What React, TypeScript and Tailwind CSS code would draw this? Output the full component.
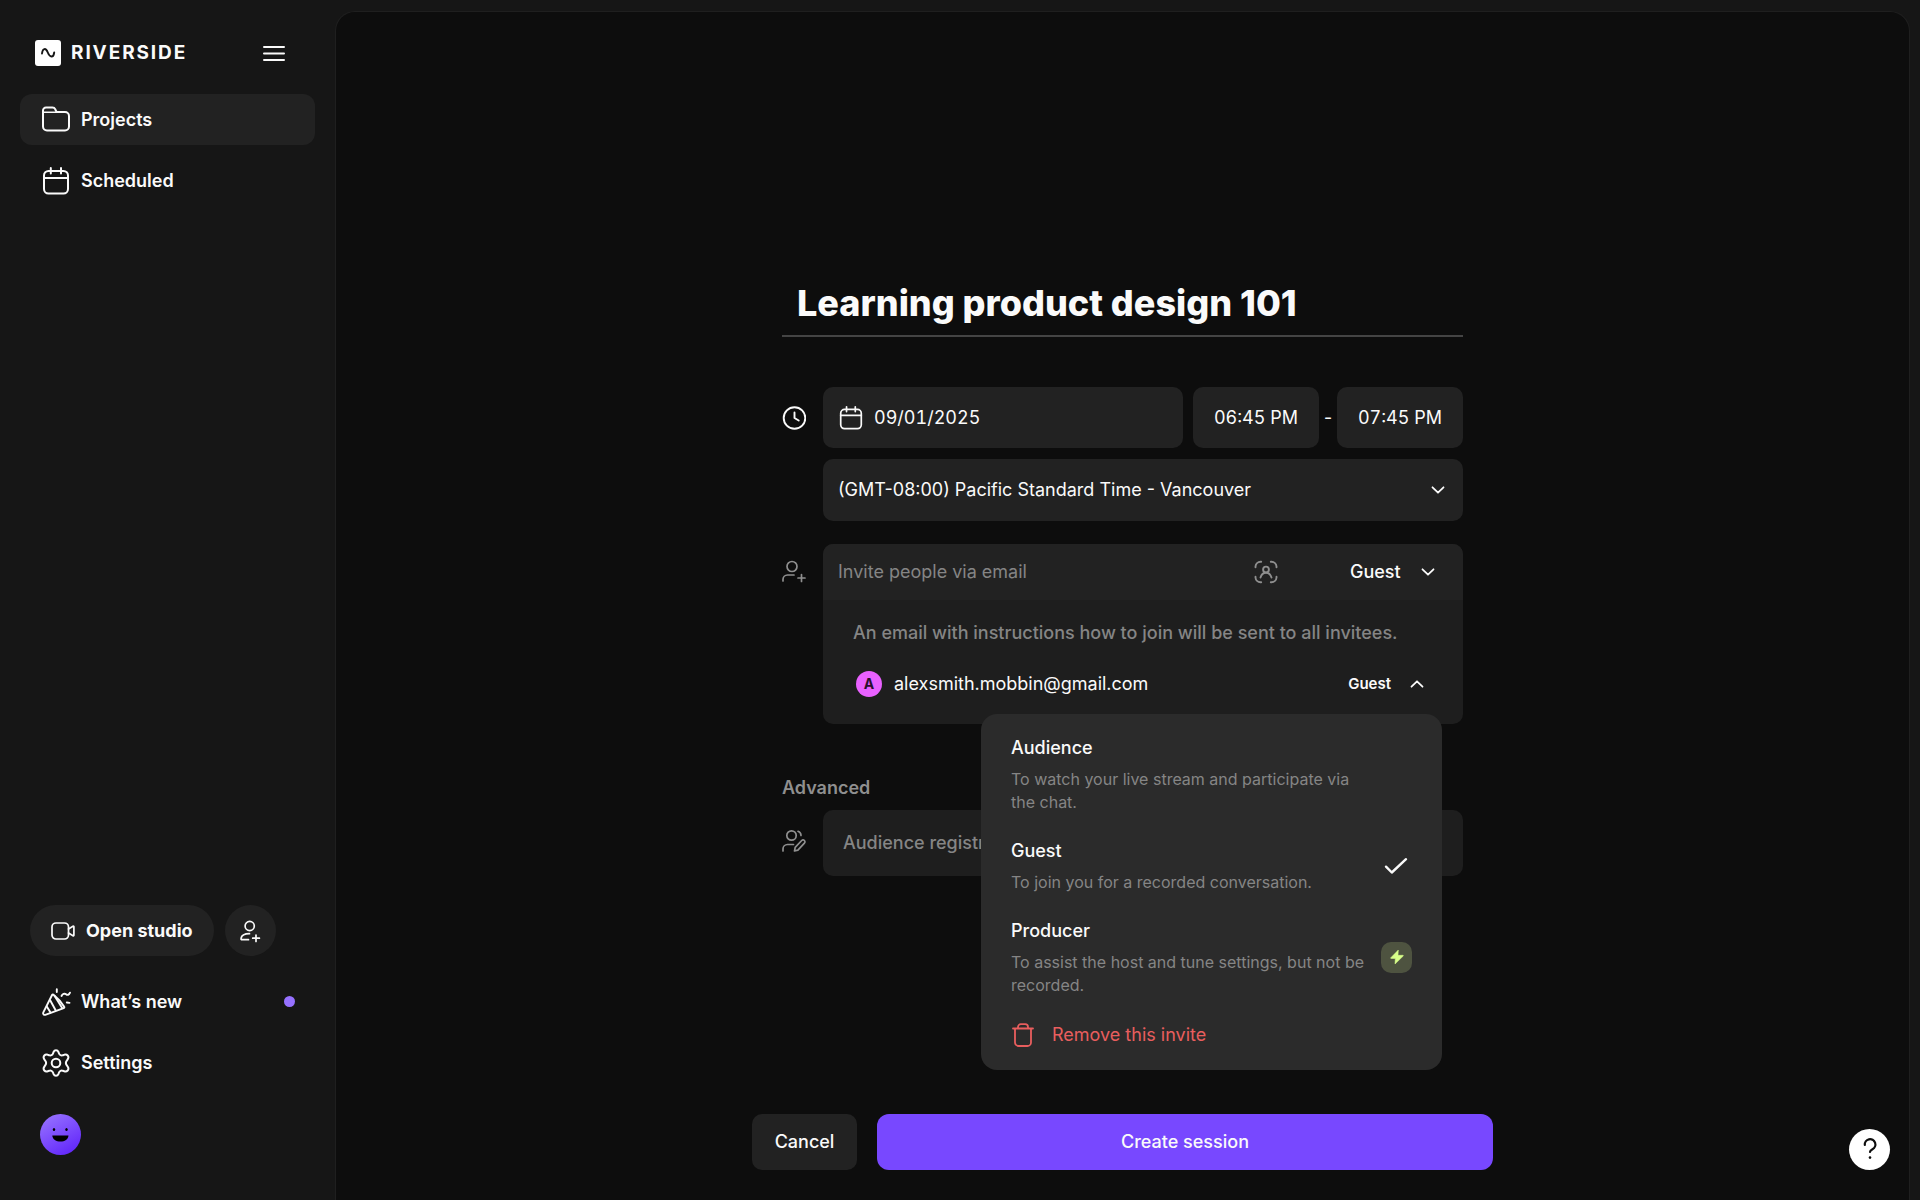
import React, { useState } from 'react';

type IconProps = { className?: string };

interface Role {
  name: string;
  description: string;
  premium?: boolean;
}

const ROLES: Role[] = [
  { name: 'Audience', description: 'To watch your live stream and participate via the chat.' },
  { name: 'Guest', description: 'To join you for a recorded conversation.' },
  { name: 'Producer', description: 'To assist the host and tune settings, but not be recorded.', premium: true },
];

const Svg: React.FC<React.SVGProps<SVGSVGElement>> = ({ children, ...props }) => (
  <svg fill="none" stroke="currentColor" strokeWidth="2" strokeLinecap="round" strokeLinejoin="round" aria-hidden="true" {...props}>
    {children}
  </svg>
);

const FolderIcon = () => (
  <Svg className="h-7 w-7" viewBox="0 0 28 28">
    <path d="M1 6V20.500a4 4 0 0 0 4 4H23a4 4 0 0 0 4-4V10a4 4 0 0 0-4-4H14.500L13.200 3.200A3 3 0 0 0 10.500 1.500H4A3 3 0 0 0 1 4.500Z" />
    <path d="M1.500 6.200H14.500" strokeWidth="1.500" />
  </Svg>
);

const CalendarIcon: React.FC<IconProps> = ({ className }) => (
  <Svg className={className} viewBox="0 0 28 28">
    <rect x="2" y="4" width="24" height="22.500" rx="4.500" />
    <path d="M2 11H26M8.800 1V6.500M19 1V6.500" />
  </Svg>
);

const VideoIcon = () => (
  <Svg className="h-6 w-6" viewBox="0 0 24 24" strokeWidth="1.700">
    <rect x="1" y="4" width="16.500" height="16" rx="4" />
    <path d="M17.500 10 22 7.200a.6.600 0 0 1 .9.500V16.300a.6.600 0 0 1-.9.500L17.500 14" />
  </Svg>
);

const AddPersonIcon = () => (
  <Svg className="h-5 w-5 overflow-visible" viewBox="0 0 20 20" strokeWidth="1.700">
    <circle cx="9.700" cy="5" r="4.600" />
    <path d="M9.500 12.700C5 12.700 1.500 14.500 1 17.500a1 1 0 0 0 1 1.200H8.500M16 14V20.500M12.700 17.200H19.400" />
  </Svg>
);

const PartyIcon = () => (
  <Svg className="h-7 w-7 overflow-visible" viewBox="0 0 28 28" strokeWidth="1.900">
    <path d="M10.200 6.800 1.200 24.600a1.700 1.700 0 0 0 2.100 2.200L21.700 20.200a1 1 0 0 0 .5-1.500C19.500 14.200 16 10.300 11.500 6.700a.8.800 0 0 0-1.300.1Z" />
    <path d="M12.500 7.800 20 19.800M8.300 12.500 13.500 22M4.800 18.500 8.500 24.500M14.800 1.200V4M19.500 8c1-2 3-3 4.500-1.800s3 .8 4-1.500M24.800 14.500l2.700.4" />
  </Svg>
);

const GearIcon = () => (
  <Svg className="h-7 w-7" viewBox="0 0 28 28">
    <path d="M11.600 2.800a2.600 2.600 0 0 1 4.800 0l.6 1.700a2.900 2.900 0 0 0 3.900 1.700l1.400-.5a2.900 2.900 0 0 1 3.600 4.200l-1.100 1.800a3.700 3.700 0 0 0 0 4.600l1.100 1.800a2.900 2.900 0 0 1-3.600 4.200l-1.400-.5a2.900 2.900 0 0 0-3.900 1.700l-.6 1.700a2.600 2.600 0 0 1-4.800 0l-.6-1.700a2.900 2.900 0 0 0-3.900-1.700l-1.400.5a2.900 2.900 0 0 1-3.600-4.200l1.100-1.800a3.700 3.700 0 0 0 0-4.600L2.100 9.900a2.900 2.900 0 0 1 3.600-4.200l1.400.5A2.900 2.900 0 0 0 11 4.500Z" />
    <circle cx="14" cy="14" r="4.300" />
  </Svg>
);

const ClockIcon = () => (
  <Svg className="h-6 w-6" viewBox="0 0 24 24" strokeWidth="1.900">
    <circle cx="12.500" cy="12" r="10.800" />
    <path d="M12.500 6.500V12L16.700 14.500" />
  </Svg>
);

const InviteIcon = () => (
  <Svg className="h-6 w-6" viewBox="0 0 24 24" strokeWidth="1.700">
    <circle cx="10" cy="6.500" r="5" />
    <path d="M1 21V19.500A4.500 4.500 0 0 1 5.500 15H12M19.500 14.500V21.500M16 18H23" />
  </Svg>
);

const RegistrationIcon = () => (
  <Svg className="h-6 w-6" viewBox="0 0 24 24" strokeWidth="1.700">
    <circle cx="9.500" cy="6.500" r="4.700" />
    <path d="M1 22V20A4.500 4.500 0 0 1 5.500 15.500H11.500M16 2.300C17.800 3 19 4.500 19 6.500M12.500 22l.7-3.700 6.500-6.800a1.900 1.900 0 0 1 2.700 2.700l-6.500 6.900Z" />
  </Svg>
);

const ScanPersonIcon = () => (
  <Svg className="h-6 w-6 text-[#8f8f8f]" viewBox="0 0 24 24" strokeWidth="1.900">
    <path d="M1.500 7.200V6.500A5 5 0 0 1 6.500 1.800H7.200M16.800 1.800H17.500A5 5 0 0 1 22.500 6.500V7.200M22.500 16.800V17.500A5 5 0 0 1 17.500 22.200H16.800M7.200 22.200H6.500A5 5 0 0 1 1.500 17.500V16.800" />
    <circle cx="12" cy="9.500" r="2.900" />
    <path d="M6.500 17.500C7.500 14.300 9.500 12.800 12 12.800s4.500 1.500 5.500 4.700" />
  </Svg>
);

const Chevron: React.FC<IconProps> = ({ className = '' }) => (
  <Svg className={`h-4 w-4 shrink-0 ${className}`} viewBox="0 0 16 16" strokeWidth="1.800">
    <path d="M2.500 5.300 8 10.700 13.500 5.300" />
  </Svg>
);

const TrashIcon = () => (
  <Svg className="h-6 w-6" viewBox="0 0 24 24" strokeWidth="1.800">
    <path d="M2 5.500H22M4 5.500V19.500A3.500 3.500 0 0 0 7.500 23H16.500A3.500 3.500 0 0 0 20 19.500V5.500M7 5.500V4A2.800 2.800 0 0 1 9.800 1.200H14.200A2.800 2.800 0 0 1 17 4V5.500" />
  </Svg>
);

const NavItem: React.FC<{ label: string; icon: React.ReactNode; active?: boolean; dot?: boolean }> = ({ label, icon, active, dot }) => (
  <a
    href="#"
    className={`flex h-[51px] items-center gap-[11px] rounded-xl pr-5 pl-[22px] text-lg font-semibold ${active ? 'bg-[#222222]' : ''}`}
  >
    {icon}
    <span className="flex-1">{label}</span>
    {dot && <span className="h-[11px] w-[11px] rounded-full bg-[#9671ff]" />}
  </a>
);

const Sidebar = () => (
  <aside className="flex w-[335px] shrink-0 flex-col px-5 pt-7 pb-[45px]">
    <div className="flex h-[50px] items-center justify-between pr-[30px] pl-[15px]">
      <a href="#" className="flex items-center gap-[10px]">
        <svg className="h-[26px] w-[26px]" viewBox="0 0 26 26" fill="none" aria-hidden="true">
          <rect width="26" height="26" rx="3" fill="white" />
          <path d="M7 13.500C7.600 8 10.800 7.500 12.800 12.500S18.400 18.200 19.200 12.500" stroke="#161616" strokeWidth="1.900" strokeLinecap="round" />
        </svg>
        <span className="pt-px text-[19px] font-bold tracking-widest">RIVERSIDE</span>
      </a>
      <button aria-label="Toggle menu">
        <Svg className="h-[22px] w-[22px]" viewBox="0 0 22 22">
          <path d="M1 5H21M1 11.500H21M1 18H21" />
        </Svg>
      </button>
    </div>

    <nav className="mt-4 flex flex-col gap-[10px]">
      <NavItem label="Projects" icon={<FolderIcon />} active />
      <NavItem label="Scheduled" icon={<CalendarIcon className="h-7 w-7" />} />
    </nav>

    <div className="mt-auto">
      <div className="flex gap-[11px] pl-[10px]">
        <button className="flex h-[51px] items-center gap-[11px] rounded-full bg-[#222222] px-[21px] text-lg font-bold">
          <VideoIcon />
          Open studio
        </button>
        <button aria-label="Invite people" className="flex h-[51px] w-[51px] items-center justify-center rounded-full bg-[#222222]">
          <AddPersonIcon />
        </button>
      </div>
      <nav className="mt-5 flex flex-col gap-[10px]">
        <NavItem label="What’s new" icon={<PartyIcon />} dot />
        <NavItem label="Settings" icon={<GearIcon />} />
      </nav>
      <button aria-label="Account" className="mt-[26px] ml-5 block">
        <svg className="h-[41px] w-[41px]" viewBox="0 0 41 41" aria-hidden="true">
          <defs>
            <linearGradient id="avatar" x1="0.200" y1="0" x2="0.800" y2="1">
              <stop stopColor="#9671ff" />
              <stop offset="1" stopColor="#6024fa" />
            </linearGradient>
          </defs>
          <circle cx="20.500" cy="20.500" r="20.500" fill="url(#avatar)" />
          <ellipse cx="14" cy="15.500" rx="1.200" ry="1.600" />
          <ellipse cx="26.500" cy="15.500" rx="1.200" ry="1.600" />
          <path d="M12.300 21.500H28.500C28 25.500 24.800 27.500 20.400 27.500S12.800 25.500 12.300 21.500Z" />
        </svg>
      </button>
    </div>
  </aside>
);

const RoleMenu: React.FC<{ role: string; onPick: (role: string) => void }> = ({ role, onPick }) => (
  <div className="absolute top-[170px] right-[21px] z-10 w-[461px] rounded-2xl bg-[#2b2b2b] px-[30px] py-5">
    {ROLES.map(r => (
      <button key={r.name} type="button" onClick={() => onPick(r.name)} className="mb-[23px] flex w-full items-center justify-between text-left">
        <span className="w-[360px] shrink-0">
          <span className="block text-lg font-medium">{r.name}</span>
          <span className="mt-[6px] block text-base leading-[23px] text-[#858585]">{r.description}</span>
        </span>
        {r.name === role && (
          <Svg className="mr-1 h-6 w-6" viewBox="0 0 24 24" strokeWidth="2.400">
            <path d="M2 12.700 7.800 18.500 22 5.200" />
          </Svg>
        )}
        {r.premium && (
          <span className="flex h-[31px] w-[31px] shrink-0 items-center justify-center rounded-[10px] bg-[#4e5340]">
            <svg className="h-4 w-4" viewBox="0 0 16 16" fill="#d8ff8a" aria-hidden="true">
              <path d="M9.300 1 1.800 8.700c-.3.400-.1.800.4.800H6.300L6 15l8.200-7.900c.3-.3.100-.8-.4-.8H9Z" stroke="#d8ff8a" strokeWidth="0.500" strokeLinejoin="round" />
            </svg>
          </span>
        )}
      </button>
    ))}
    <button type="button" className="flex h-[30px] items-center gap-[17px] text-lg text-[#e85e5e]">
      <TrashIcon />
      Remove this invite
    </button>
  </div>
);

const SessionForm = () => {
  const [title, setTitle] = useState('Learning product design 101');
  const [date, setDate] = useState('09/01/2025');
  const [start, setStart] = useState('06:45 PM');
  const [end, setEnd] = useState('07:45 PM');
  const [inviteRole, setInviteRole] = useState('Guest');
  const [role, setRole] = useState('Guest');
  const [menuOpen, setMenuOpen] = useState(true);

  return (
    <form className="mx-auto w-full max-w-[681px] pt-[258px] text-lg" onSubmit={e => e.preventDefault()}>
      <input
        aria-label="Session name"
        value={title}
        onChange={e => setTitle(e.target.value)}
        className="h-[67px] w-full border-b-2 border-[#444444] px-[15px] text-4xl font-extrabold outline-none"
      />

      <div className="mt-[50px] grid grid-cols-[24px_1fr] gap-x-[17px]">
        <div className="flex h-[61px] items-center"><ClockIcon /></div>
        <div className="flex items-center tabular-nums">
          <label className="mr-[10px] flex h-[61px] flex-1 items-center gap-[11px] rounded-[10px] bg-[#222222] px-4">
            <CalendarIcon className="h-6 w-6" />
            <input aria-label="Date" value={date} onChange={e => setDate(e.target.value)} className="min-w-0 flex-1 outline-none" />
          </label>
          <input
            aria-label="Start time"
            value={start}
            onChange={e => setStart(e.target.value)}
            className="h-[61px] w-[126px] rounded-[10px] bg-[#222222] text-center outline-none"
          />
          <span className="w-[18px] text-center">-</span>
          <input
            aria-label="End time"
            value={end}
            onChange={e => setEnd(e.target.value)}
            className="h-[61px] w-[126px] rounded-[10px] bg-[#222222] text-center outline-none"
          />
        </div>

        <div className="col-start-2 mt-[11px] grid items-center rounded-[10px] bg-[#222222]">
          <select aria-label="Time zone" className="col-start-1 row-start-1 h-[62px] appearance-none px-[15px] outline-none">
            <option>(GMT-08:00) Pacific Standard Time - Vancouver</option>
          </select>
          <Chevron className="pointer-events-none col-start-1 row-start-1 mr-[17px] justify-self-end" />
        </div>

        <div className="mt-[23px] flex h-[56px] items-center text-[#8f8f8f]"><InviteIcon /></div>
        <div className="relative mt-[23px] h-[180px] rounded-[10px] bg-[#1e1e1e]">
          <div className="flex h-[56px] items-center rounded-t-[10px] bg-[#222222] pr-[27px] pl-[15px]">
            <input
              type="email"
              aria-label="Invite people via email"
              placeholder="Invite people via email"
              className="min-w-0 flex-1 outline-none placeholder:text-[#858585]"
            />
            <button type="button" aria-label="Pick from contacts"><ScanPersonIcon /></button>
            <div className="ml-[72px] grid w-[86px] items-center">
              <select
                aria-label="Role"
                value={inviteRole}
                onChange={e => setInviteRole(e.target.value)}
                className="col-start-1 row-start-1 appearance-none font-medium outline-none"
              >
                {ROLES.map(r => <option key={r.name}>{r.name}</option>)}
              </select>
              <Chevron className="pointer-events-none col-start-1 row-start-1 justify-self-end" />
            </div>
          </div>
          <p className="pt-[19px] pl-[30px] font-medium text-[#858585]">An email with instructions how to join will be sent to all invitees.</p>
          <div className="mt-6 flex h-[26px] items-center pr-[38px] pl-[33px]">
            <span className="mr-3 flex h-[26px] w-[26px] items-center justify-center rounded-full bg-[#e961ff] text-sm font-bold text-[#2a0f2e]">A</span>
            <span className="flex-1">alexsmith.mobbin@gmail.com</span>
            <button
              type="button"
              aria-expanded={menuOpen}
              onClick={() => setMenuOpen(!menuOpen)}
              className="flex items-center gap-[18px] text-[15px] font-semibold"
            >
              {role}
              <Chevron className="rotate-180" />
            </button>
          </div>
          {menuOpen && <RoleMenu role={role} onPick={setRole} />}
        </div>

        <h2 className="col-span-2 mt-[50px] font-semibold text-[#8f8f8f]">Advanced</h2>
        <div className="mt-2 flex h-[62px] items-center text-[#8f8f8f]"><RegistrationIcon /></div>
        <button type="button" className="mt-2 h-[66px] rounded-[10px] bg-[#1e1e1e] px-5 text-left font-medium text-[#858585]">
          Audience registration
        </button>
      </div>
    </form>
  );
};

export default function App() {
  return (
    <div className="flex min-h-screen bg-[#161616] pr-[10px] font-['Inter',sans-serif] text-[#fafafa]">
      <Sidebar />
      <main className="mt-[11px] flex min-w-0 flex-1 flex-col rounded-t-[20px] border border-b-0 border-[#1f1f1f] bg-[#0d0d0d]">
        <SessionForm />
        <footer className="mt-auto grid grid-cols-[1fr_minmax(0,741px)_1fr] items-center pb-[30px]">
          <div className="col-start-2 flex gap-5 text-lg font-medium">
            <button className="h-[56px] w-[105px] rounded-[10px] bg-[#222222]">Cancel</button>
            <button className="h-[56px] flex-1 rounded-[12px] bg-[#7848ff]">Create session</button>
          </div>
          <button
            aria-label="Help"
            className="mt-[14px] mr-[19px] flex h-[41px] w-[41px] items-center justify-center justify-self-end rounded-full bg-white text-[#0d0d0d]"
          >
            <Svg className="h-6 w-6" viewBox="0 0 24 24" strokeWidth="2.200">
              <path d="M6.800 8A5.300 5.300 0 1 1 14.500 12.200C12.900 13.100 12 13.700 12 15" />
              <path d="M12 20.500v.1" strokeWidth="2.600" />
            </Svg>
          </button>
        </footer>
      </main>
    </div>
  );
}
